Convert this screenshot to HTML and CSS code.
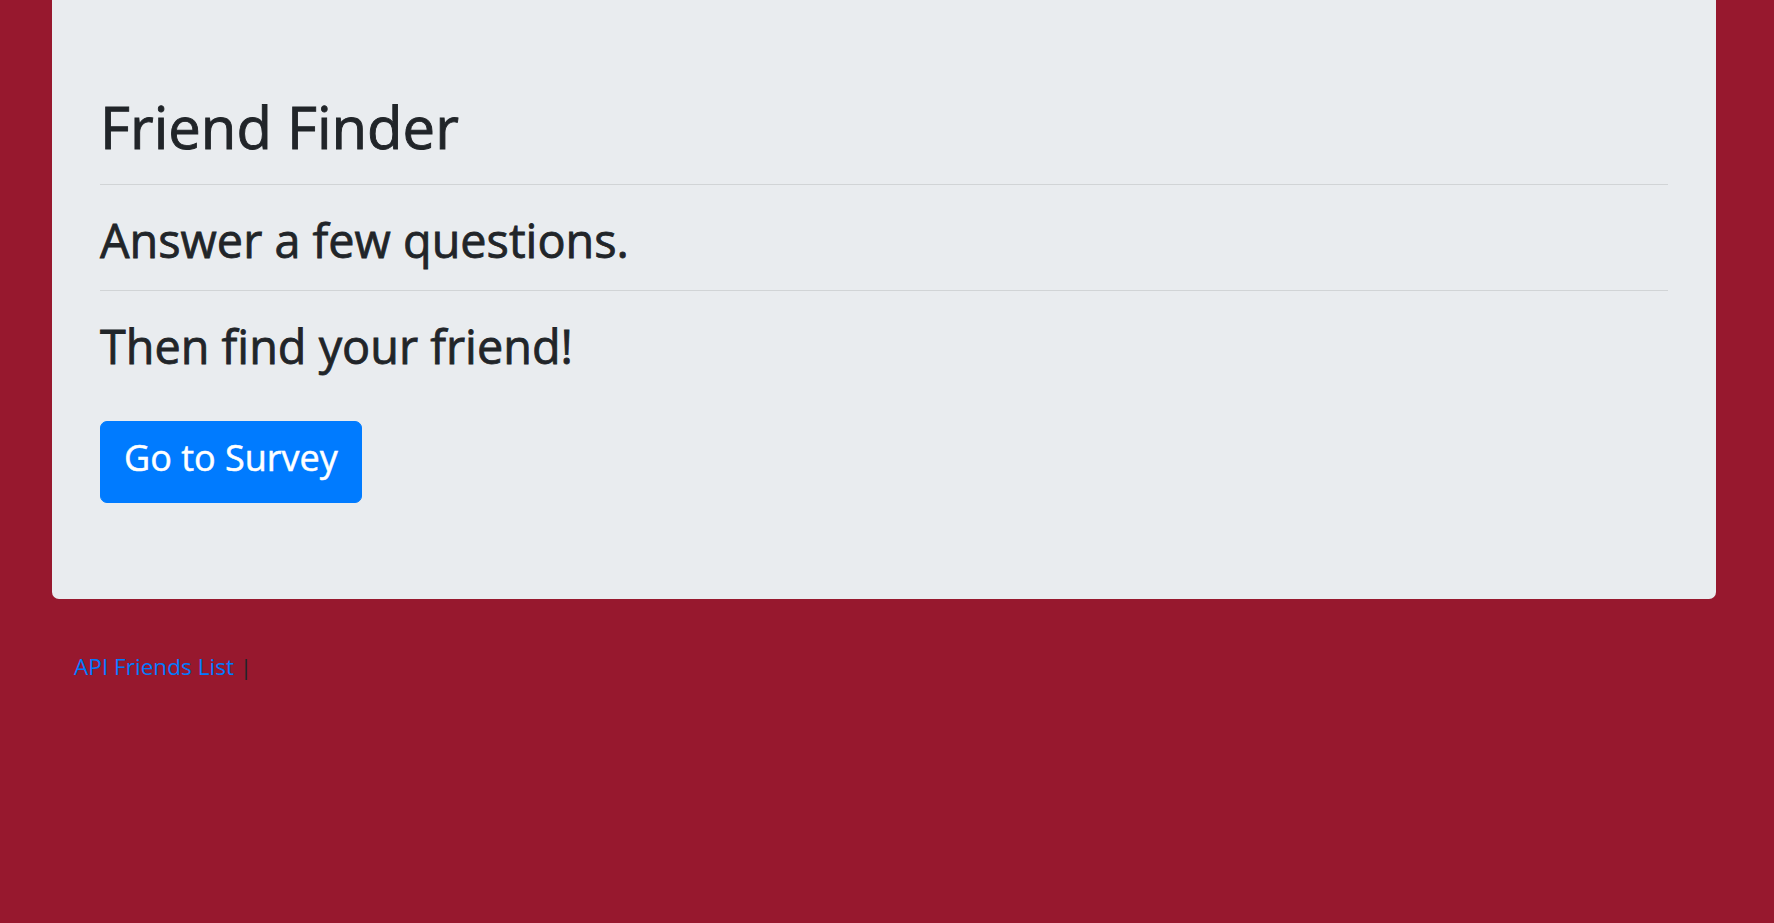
FILE: index.html
```html
<!DOCTYPE html>
<html lang="en">
<head>
<meta charset="utf-8">
<title>Friend Finder</title>
<link rel="stylesheet" href="styles.css">
</head>
<body>
  <main class="page">
    <section class="jumbotron">
      <h1 class="title">Friend Finder</h1>
      <hr class="rule rule-first">
      <h2 class="lead-line">Answer a few questions.</h2>
      <hr class="rule">
      <h2 class="lead-line lead-last">Then find your friend!</h2>
      <a class="btn-survey" href="#">Go to Survey</a>
    </section>
    <footer class="footer">
      <a class="footer-link" href="#">API Friends List</a> <span class="sep">|</span>
    </footer>
  </main>
</body>
</html>
```

FILE: styles.css
```css
html, body {
  margin: 0;
  padding: 0;
}
body {
  background: #97182e;
  font-family: "Open Sans", "Noto Sans", sans-serif;
  color: #212529;
  height: 923px;
  overflow: hidden;
}
.page {
  display: flex;
  flex-direction: column;
}
.jumbotron {
  margin: 0 58px 0 52px;
  background: #e9ecef;
  border-radius: 0 0 7px 7px;
  padding: 92px 48px 96px 48px;
  display: flex;
  flex-direction: column;
  align-items: flex-start;
}
.title {
  margin: 0;
  font-size: 58px;
  font-weight: 400;
  line-height: 1.2;
  -webkit-text-stroke: 0.9px #212529;
}
.rule {
  align-self: stretch;
  border: 0;
  border-top: 1px solid rgba(0, 0, 0, 0.1);
  margin: 22.5px 0 0 0;
  height: 0;
}
.rule-first {
  margin-top: 22.5px;
}
.lead-line {
  margin: 26.5px 0 0 0;
  font-size: 46.8px;
  font-weight: 400;
  line-height: 1.2;
  -webkit-text-stroke: 0.8px #212529;
}
.lead-last {
  margin-top: 26.5px;
}
.btn-survey {
  margin-top: 47.5px;
  display: inline-block;
  background: #007bff;
  border: 1px solid #007bff;
  color: #fff;
  text-decoration: none;
  font-size: 36px;
  line-height: 54px;
  padding: 9px 23px 17px 23px;
  border-radius: 7px;
  -webkit-text-stroke: 0.5px #fff;
}
.footer {
  padding: 51px 0 0 74px;
  font-size: 22.6px;
  line-height: 33px;
}
.footer-link {
  color: #007bff;
  text-decoration: none;
}
.sep {
  color: #212529;
}
```
